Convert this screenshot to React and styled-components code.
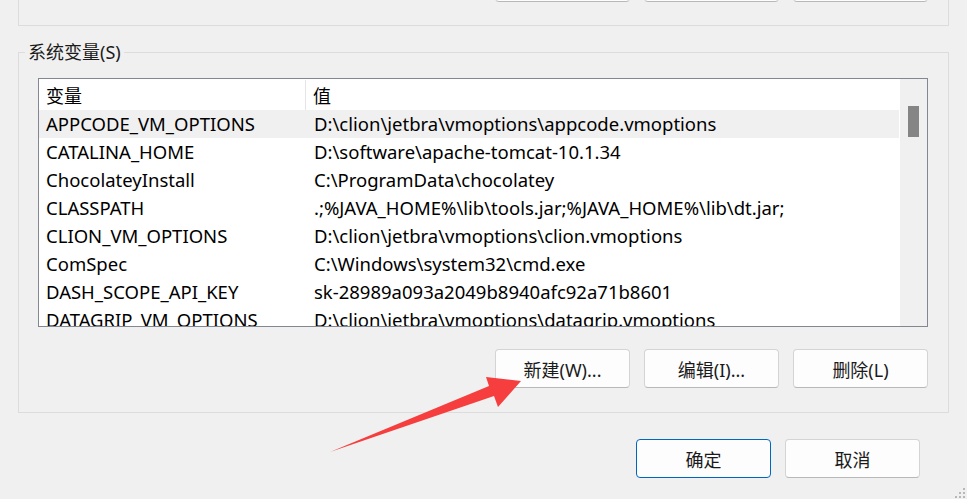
import React from "react";
import styled, { createGlobalStyle } from "styled-components";

const GlobalStyle = createGlobalStyle`
  body {
    margin: 0;
    background: #f0f0f0;
    font-family: "Segoe UI", "Noto Sans", "Noto Sans CJK SC", sans-serif;
  }
`;

const vars = [
  ["APPCODE_VM_OPTIONS", "D:\\clion\\jetbra\\vmoptions\\appcode.vmoptions"],
  ["CATALINA_HOME", "D:\\software\\apache-tomcat-10.1.34"],
  ["ChocolateyInstall", "C:\\ProgramData\\chocolatey"],
  ["CLASSPATH", ".;%JAVA_HOME%\\lib\\tools.jar;%JAVA_HOME%\\lib\\dt.jar;"],
  ["CLION_VM_OPTIONS", "D:\\clion\\jetbra\\vmoptions\\clion.vmoptions"],
  ["ComSpec", "C:\\Windows\\system32\\cmd.exe"],
  ["DASH_SCOPE_API_KEY", "sk-28989a093a2049b8940afc92a71b8601"],
  ["DATAGRIP_VM_OPTIONS", "D:\\clion\\jetbra\\vmoptions\\datagrip.vmoptions"],
];

const App = () => {
  return (
    <>
      <GlobalStyle />
      <Window>
        {/* user variables group, scrolled mostly out of view */}
        <TopGroup>
          <Button />
          <Button />
          <Button />
        </TopGroup>

        <GroupBox>
          <Legend>系统变量(S)</Legend>
          <GroupInner>
            <ListBox>
              <ListArea>
                <HeaderRow>
                  <HeaderCell divider>变量</HeaderCell>
                  <HeaderCell>值</HeaderCell>
                </HeaderRow>
                {vars.map(([name, value], i) => (
                  <Row key={name} selected={i === 0}>
                    <Cell>{name}</Cell>
                    <Cell value>{value}</Cell>
                  </Row>
                ))}
              </ListArea>
              <ScrollTrack>
                <ScrollThumb />
              </ScrollTrack>
            </ListBox>
            <ButtonRow>
              <Button>新建(W)...</Button>
              <Button>编辑(I)...</Button>
              <Button>删除(L)</Button>
            </ButtonRow>
          </GroupInner>
        </GroupBox>

        <Footer>
          <Button primary>确定</Button>
          <Button>取消</Button>
          <Grip width="12" height="11" viewBox="0 0 12 11">
            <rect x="10" y="1" width="2" height="2" fill="#b8b8b8" />
            <rect x="6" y="5" width="2" height="2" fill="#b8b8b8" />
            <rect x="10" y="5" width="2" height="2" fill="#b8b8b8" />
            <rect x="2" y="9" width="2" height="2" fill="#b8b8b8" />
            <rect x="6" y="9" width="2" height="2" fill="#b8b8b8" />
            <rect x="10" y="9" width="2" height="2" fill="#b8b8b8" />
          </Grip>
        </Footer>

        <Arrow viewBox="0 0 967 499" width="967" height="499">
          <polygon
            points="330,452 489,386 486,377 521,381 498,407 494,396"
            fill="#f63e3e"
          />
        </Arrow>
      </Window>
    </>
  );
};

const Window = styled.div`
  position: relative;
  width: 967px;
  height: 499px;
  overflow: hidden;
  background: #f0f0f0;
  display: flex;
  flex-direction: column;
  color: #000;
  font-size: 18px;
`;

const TopGroup = styled.div`
  display: flex;
  justify-content: flex-end;
  gap: 14px;
  margin: -38px 18px 0 18px;
  padding: 0 20px 23px 0;
  border: 1px solid #dcdcdc;
`;

const GroupBox = styled.fieldset`
  margin: 14px 18px 0 18px;
  padding: 0;
  min-width: 0;
  border: 1px solid #dcdcdc;
`;

const Legend = styled.legend`
  margin-left: 6px;
  padding: 0 3px;
  font-size: 18px;
  line-height: 24px;
  color: #1a1a1a;
`;

const GroupInner = styled.div`
  padding: 14px 20px 24px 19px;
`;

const ListBox = styled.div`
  display: flex;
  height: 249px;
  box-sizing: border-box;
  border: 1px solid #828790;
  background: #fff;
`;

const ListArea = styled.div`
  flex: 1;
  overflow: hidden;
  border-right: 1px solid #fff;
  font-size: 18.5px;
`;

const HeaderRow = styled.div`
  display: grid;
  grid-template-columns: 267px 1fr;
  height: 31px;
  align-items: stretch;
  font-size: 18px;
`;

const HeaderCell = styled.div`
  display: flex;
  align-items: center;
  padding-left: 7px;
  margin-top: 1px;
  border-right: ${(p) => (p.divider ? "1px solid #e5e5e5" : "none")};
`;

const Row = styled.div`
  display: grid;
  grid-template-columns: 267px 1fr;
  height: 28px;
  line-height: 28px;
  background: ${(p) => (p.selected ? "#f0f0f0" : "transparent")};
`;

const Cell = styled.div`
  padding-left: ${(p) => (p.value ? "8px" : "7px")};
  white-space: nowrap;
  overflow: hidden;
`;

const ScrollTrack = styled.div`
  width: 27px;
  background: #f0f0f0;
  display: flex;
  justify-content: center;
  padding-top: 27px;
  box-sizing: border-box;
`;

const ScrollThumb = styled.div`
  width: 11px;
  height: 31px;
  background: #858585;
`;

const ButtonRow = styled.div`
  display: flex;
  justify-content: flex-end;
  gap: 14px;
  margin-top: 22px;
`;

const Button = styled.button`
  width: 135px;
  height: 39px;
  box-sizing: border-box;
  padding: 0;
  background: #fdfdfd;
  border: 1px solid ${(p) => (p.primary ? "#0067c0" : "#d4d4d4")};
  border-bottom-color: ${(p) => (p.primary ? "#0067c0" : "#b8b8b8")};
  border-radius: 4px;
  font-family: "Segoe UI", "Noto Sans", "Noto Sans CJK SC", sans-serif;
  font-size: 18px;
  color: #1a1a1a;
`;

const Footer = styled.div`
  display: flex;
  justify-content: flex-end;
  align-items: flex-start;
  gap: 14px;
  margin-top: 26px;
  padding-right: 2px;
  flex: 1;
`;

const Grip = styled.svg`
  align-self: flex-end;
  margin-left: 19px;
  margin-bottom: 1px;
`;

const Arrow = styled.svg`
  position: absolute;
  left: 0;
  top: 0;
  pointer-events: none;
`;

export default App;
